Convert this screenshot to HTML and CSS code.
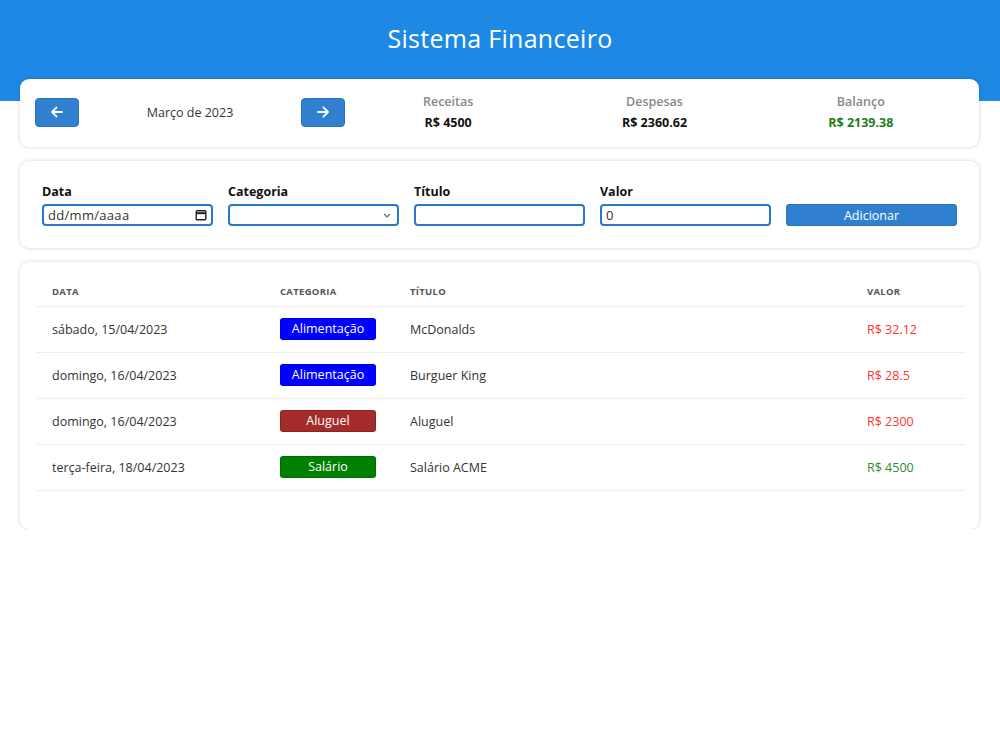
FILE: index.html
```html
<!DOCTYPE html>
<html lang="pt-BR">
<head>
<meta charset="utf-8">
<title>Sistema Financeiro</title>
<link rel="stylesheet" href="styles.css">
</head>
<body>
<header class="header">
  <h1 class="header-title">Sistema Financeiro</h1>
</header>
<main class="main">
  <section class="card info">
    <div class="month">
      <button class="arrow-btn" aria-label="Anterior">
        <svg width="16" height="16" viewBox="0 0 16 16" fill="none" stroke="#fff" stroke-width="1.8" stroke-linecap="round" stroke-linejoin="round"><path d="M13 8H3M7.5 3.5L3 8l4.5 4.5"/></svg>
      </button>
      <span class="month-title">Março de 2023</span>
      <button class="arrow-btn" aria-label="Próximo">
        <svg width="16" height="16" viewBox="0 0 16 16" fill="none" stroke="#fff" stroke-width="1.8" stroke-linecap="round" stroke-linejoin="round"><path d="M3 8h10M8.5 3.5L13 8l-4.5 4.5"/></svg>
      </button>
    </div>
    <div class="resume">
      <div class="resume-title">Receitas</div>
      <div class="resume-value">R$ 4500</div>
    </div>
    <div class="resume">
      <div class="resume-title">Despesas</div>
      <div class="resume-value">R$ 2360.62</div>
    </div>
    <div class="resume">
      <div class="resume-title">Balanço</div>
      <div class="resume-value positive">R$ 2139.38</div>
    </div>
  </section>

  <section class="card form">
    <label class="field">
      <span class="field-label">Data</span>
      <span class="input date-box">
        <input class="date-text" type="text" placeholder="dd/mm/aaaa">
        <svg class="cal-icon" width="12" height="12" viewBox="0 0 12 12" fill="none" stroke="#222" stroke-width="1.4"><rect x="1.2" y="1.7" width="9.6" height="9" rx="1"/><path d="M1.2 4.2h9.6" stroke-width="2"/></svg>
      </span>
    </label>
    <label class="field">
      <span class="field-label">Categoria</span>
      <select class="input select"><option></option></select>
    </label>
    <label class="field">
      <span class="field-label">Título</span>
      <input class="input" type="text">
    </label>
    <label class="field">
      <span class="field-label">Valor</span>
      <input class="input" type="number" value="0">
    </label>
    <div class="field">
      <span class="field-label">&nbsp;</span>
      <button class="add-btn">Adicionar</button>
    </div>
  </section>

  <section class="card table-card">
    <table class="table">
      <thead>
        <tr>
          <th class="col-date">Data</th>
          <th class="col-cat">Categoria</th>
          <th class="col-title">Título</th>
          <th class="col-value">Valor</th>
        </tr>
      </thead>
      <tbody>
        <tr>
          <td>sábado, 15/04/2023</td>
          <td><span class="badge food">Alimentação</span></td>
          <td>McDonalds</td>
          <td class="neg">R$ 32.12</td>
        </tr>
        <tr>
          <td>domingo, 16/04/2023</td>
          <td><span class="badge food">Alimentação</span></td>
          <td>Burguer King</td>
          <td class="neg">R$ 28.5</td>
        </tr>
        <tr>
          <td>domingo, 16/04/2023</td>
          <td><span class="badge rent">Aluguel</span></td>
          <td>Aluguel</td>
          <td class="neg">R$ 2300</td>
        </tr>
        <tr>
          <td>terça-feira, 18/04/2023</td>
          <td><span class="badge salary">Salário</span></td>
          <td>Salário ACME</td>
          <td class="pos">R$ 4500</td>
        </tr>
      </tbody>
    </table>
  </section>
</main>
</body>
</html>
```

FILE: styles.css
```css
* { box-sizing: border-box; }

body {
  margin: 0;
  font-family: "Open Sans", "DejaVu Sans", sans-serif;
  color: #222;
  background: #fff;
}

.header {
  background: #1e88e5;
  height: 101px;
  text-align: center;
  padding-top: 22px;
}

.header-title {
  margin: 0;
  color: #fff;
  font-size: 25px;
  font-weight: 400;
  line-height: 32px;
  letter-spacing: 0.3px;
}

.main {
  margin: -22px 21px 0 20px;
  display: flex;
  flex-direction: column;
  gap: 14px;
}

.card {
  background: #fff;
  border-radius: 9px;
  box-shadow: 0 0 4px rgba(0, 0, 0, 0.18);
}

/* Info */
.info {
  height: 68px;
  padding: 0 15px 2px;
  display: flex;
  align-items: center;
}

.month {
  width: 310px;
  display: flex;
  align-items: center;
  justify-content: space-between;
}

.arrow-btn {
  width: 44px;
  height: 29px;
  border: 1px solid #2a73bd;
  border-radius: 4px;
  background: #3180cf;
  display: flex;
  align-items: center;
  justify-content: center;
  padding: 0;
}

.month-title {
  font-size: 12.5px;
  color: #333;
}

.resume {
  flex: 1;
  text-align: center;
}

.resume-title {
  font-size: 12.5px;
  font-weight: 600;
  color: #888;
  line-height: 18px;
}

.resume-value {
  font-size: 12.5px;
  font-weight: 700;
  color: #111;
  margin-top: 3px;
  line-height: 18px;
}

.resume-value.positive { color: #1e7d1e; }

/* Form */
.form {
  height: 87px;
  padding: 22px 22px 0;
  display: grid;
  grid-template-columns: repeat(5, minmax(0, 1fr));
  column-gap: 15px;
}

.field {
  display: flex;
  flex-direction: column;
  min-width: 0;
}

.field-label {
  font-size: 12.5px;
  font-weight: 700;
  color: #111;
  line-height: 18px;
  margin-bottom: 3px;
}

.input {
  height: 22px;
  border: 2px solid #2a78c8;
  border-radius: 4px;
  padding: 0 4px;
  font-family: inherit;
  font-size: 13px;
  color: #333;
  background: #fff;
  width: 100%;
  min-width: 0;
}

.date-box {
  display: flex;
  align-items: center;
  padding: 0 4px 0 4px;
}

.date-text {
  flex: 1;
  width: 0;
  min-width: 0;
  border: 0;
  outline: none;
  padding: 0;
  font-family: inherit;
  font-size: 13px;
  color: #333;
  background: transparent;
}

.date-text::placeholder {
  color: #333;
  letter-spacing: 0.3px;
}

.cal-icon { flex: none; }

.select {
  appearance: none;
  -webkit-appearance: none;
  background: #fff url("data:image/svg+xml;utf8,<svg xmlns='http://www.w3.org/2000/svg' width='8' height='5' viewBox='0 0 8 5'><path d='M1 1l3 3 3-3' fill='none' stroke='%23666' stroke-width='1.1'/></svg>") no-repeat right 6px center;
}

.add-btn {
  height: 22px;
  border: 1px solid #2a73bd;
  border-radius: 3px;
  background: #3180cf;
  color: #fff;
  font-family: inherit;
  font-size: 12.5px;
  padding: 0;
}

/* Table */
.table-card {
  padding: 16px 14px 38px 16px;
}

.table {
  width: 100%;
  border-collapse: collapse;
}

.table th {
  text-align: left;
  font-size: 9.5px;
  font-weight: 700;
  text-transform: uppercase;
  color: #555;
  letter-spacing: 0.3px;
  height: 28px;
  padding: 0 16px;
  vertical-align: top;
  border-bottom: 1px solid #eceef2;
  padding-top: 7px;
}

.col-date { width: 228px; }
.col-cat { width: 130px; }
.col-value { width: 114px; }

.table td {
  height: 46px;
  padding: 0 16px;
  font-size: 12.5px;
  color: #333;
  border-bottom: 1px solid #eceef2;
}

.badge {
  display: inline-block;
  width: 96px;
  height: 22px;
  line-height: 20px;
  border-radius: 3px;
  color: #fff;
  text-align: center;
  font-size: 12.5px;
  border: 1px solid rgba(0,0,0,0.15);
}

.badge.food { background: #0000ff; }
.badge.rent { background: #a52a2a; }
.badge.salary { background: #008000; }

.table td.neg { color: #ff3333; }
.table td.pos { color: #2e8b2e; }
```
